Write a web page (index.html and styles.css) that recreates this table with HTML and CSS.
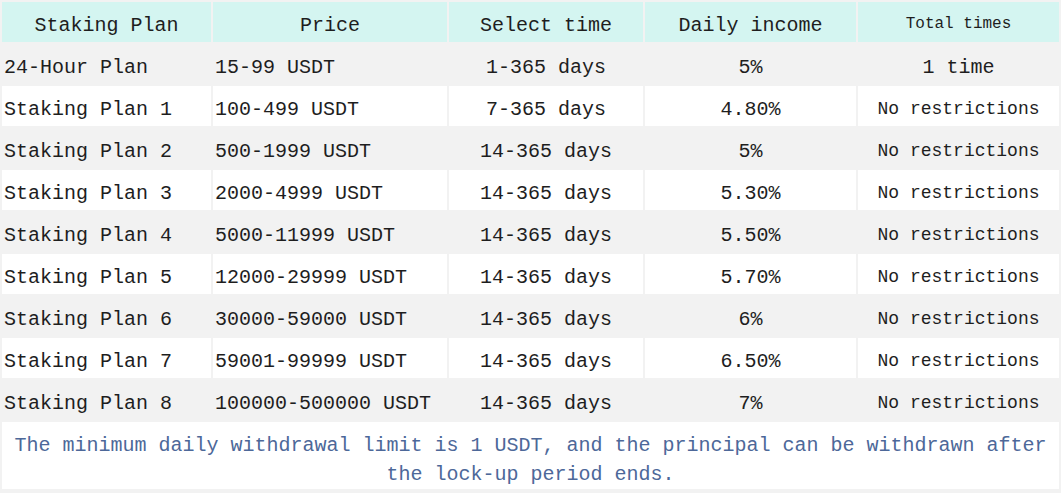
FILE: index.html
```html
<!DOCTYPE html>
<html>
<head>
<meta charset="utf-8">
<link rel="stylesheet" href="styles.css">
</head>
<body>
<table class="plans">
  <colgroup>
    <col class="c1"><col class="c2"><col class="c3"><col class="c4"><col class="c5">
  </colgroup>
  <thead>
    <tr class="head">
      <th>Staking Plan</th>
      <th>Price</th>
      <th>Select time</th>
      <th>Daily income</th>
      <th class="small">Total times</th>
    </tr>
  </thead>
  <tbody>
    <tr class="gray"><td>24-Hour Plan</td><td>15-99 USDT</td><td class="ctr">1-365 days</td><td class="ctr">5%</td><td class="ctr">1 time</td></tr>
    <tr class="white"><td>Staking Plan 1</td><td>100-499 USDT</td><td class="ctr">7-365 days</td><td class="ctr">4.80%</td><td class="ctr sm">No restrictions</td></tr>
    <tr class="gray"><td>Staking Plan 2</td><td>500-1999 USDT</td><td class="ctr">14-365 days</td><td class="ctr">5%</td><td class="ctr sm">No restrictions</td></tr>
    <tr class="white"><td>Staking Plan 3</td><td>2000-4999 USDT</td><td class="ctr">14-365 days</td><td class="ctr">5.30%</td><td class="ctr sm">No restrictions</td></tr>
    <tr class="gray"><td>Staking Plan 4</td><td>5000-11999 USDT</td><td class="ctr">14-365 days</td><td class="ctr">5.50%</td><td class="ctr sm">No restrictions</td></tr>
    <tr class="white"><td>Staking Plan 5</td><td>12000-29999 USDT</td><td class="ctr">14-365 days</td><td class="ctr">5.70%</td><td class="ctr sm">No restrictions</td></tr>
    <tr class="gray"><td>Staking Plan 6</td><td>30000-59000 USDT</td><td class="ctr">14-365 days</td><td class="ctr">6%</td><td class="ctr sm">No restrictions</td></tr>
    <tr class="white"><td>Staking Plan 7</td><td>59001-99999 USDT</td><td class="ctr">14-365 days</td><td class="ctr">6.50%</td><td class="ctr sm">No restrictions</td></tr>
    <tr class="gray"><td>Staking Plan 8</td><td>100000-500000 USDT</td><td class="ctr">14-365 days</td><td class="ctr">7%</td><td class="ctr sm">No restrictions</td></tr>
    <tr class="white"><td colspan="5" class="note">The minimum daily withdrawal limit is 1 USDT, and the principal can be withdrawn after the lock-up period ends.</td></tr>
  </tbody>
</table>
</body>
</html>
```

FILE: styles.css
```css
html, body {
  margin: 0;
  padding: 0;
  background: #f2f2f2;
}
body {
  width: 1061px;
  height: 493px;
  overflow: hidden;
  font-family: "Liberation Mono", "Noto Sans CJK SC", monospace;
  color: #1e1e1e;
}
.plans {
  width: 1061px;
  table-layout: fixed;
  border-collapse: separate;
  border-spacing: 2px;
  background: #f2f2f2;
  font-size: 20px;
}
.c1 { width: 209px; }
.c2 { width: 234px; }
.c3 { width: 194px; }
.c4 { width: 211px; }
.c5 { width: 201px; }
.plans th, .plans td {
  padding: 0 2px;
  white-space: nowrap;
  overflow: hidden;
  text-align: left;
  vertical-align: middle;
  font-weight: normal;
}
.head th {
  height: 40px;
  padding-top: 6px;
  box-sizing: border-box;
  background: #d4f5f1;
  text-align: center;
}
.head th.small {
  font-size: 16px;
  padding-top: 4px;
}
.plans tbody td {
  height: 40px;
  padding-top: 7px;
  box-sizing: border-box;
}
.gray td { background: #f2f2f2; }
.white td { background: #ffffff; }
.plans td.ctr { text-align: center; }
.plans td.sm { font-size: 18px; padding-top: 6px; }
.plans td.note {
  height: 66px;
  padding: 9px 10px 0;
  white-space: normal;
  text-align: center;
  line-height: 29px;
  color: #4d6899;
}
```
